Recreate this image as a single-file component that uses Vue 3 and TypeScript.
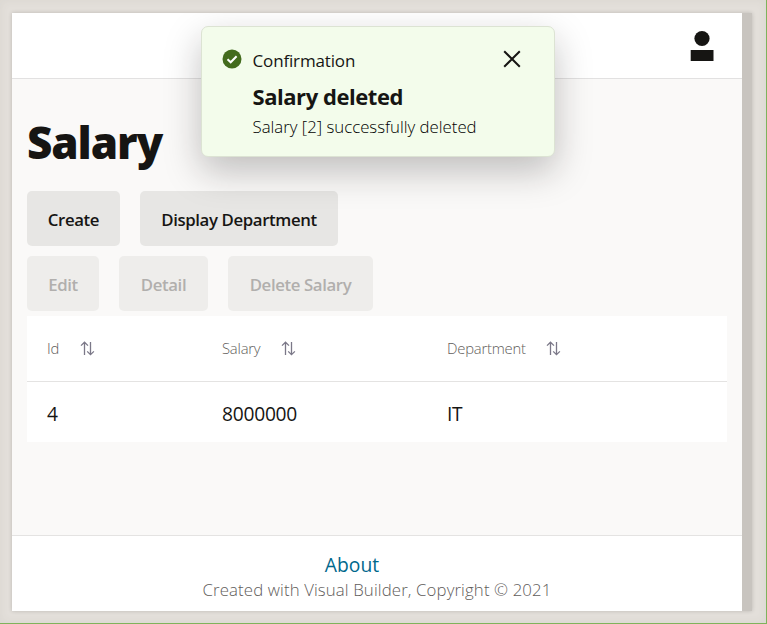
<script setup lang="ts">
interface Column {
  key: 'id' | 'salary' | 'department'
  label: string
}

const columns: Column[] = [
  { key: 'id', label: 'Id' },
  { key: 'salary', label: 'Salary' },
  { key: 'department', label: 'Department' },
]

const rows = [{ id: 4, salary: 8000000, department: 'IT' }]
</script>

<template>
  <div class="canvas">
    <div class="device">
      <div class="page">
        <header class="header">
          <svg class="avatar" width="24" height="32" viewBox="0 0 24 32">
            <circle cx="12" cy="8.5" r="7.6" />
            <rect x="0.7" y="20" width="22.8" height="11" />
          </svg>
        </header>

        <main class="content">
          <h1 class="title"><span>Salary</span></h1>
          <div class="buttons first">
            <button class="btn create"><span>Create</span></button>
            <button class="btn display"><span>Display Department</span></button>
          </div>
          <div class="buttons">
            <button class="btn edit" disabled><span>Edit</span></button>
            <button class="btn detail" disabled><span>Detail</span></button>
            <button class="btn delete" disabled><span>Delete Salary</span></button>
          </div>
          <div class="table">
            <div class="row head">
              <div v-for="col in columns" :key="col.key" class="cell">
                <span>{{ col.label }}</span>
                <svg class="sort" width="15" height="15" viewBox="0 0 15 15">
                  <path d="M4.5 14V1.2M1 4.6L4.5 1.2L8 4.6M10.5 1V13.6M7.2 10.4L10.5 13.6L13.9 10.4" />
                </svg>
              </div>
            </div>
            <div v-for="row in rows" :key="row.id" class="row body">
              <div v-for="col in columns" :key="col.key" class="cell">
                <span>{{ row[col.key] }}</span>
              </div>
            </div>
          </div>
        </main>

        <footer class="footer">
          <a class="about">About</a>
          <span class="copyright">Created with Visual Builder, Copyright © 2021</span>
        </footer>

        <section class="toast">
          <svg class="check" width="20" height="20" viewBox="0 0 20 20">
            <circle cx="10" cy="10" r="9.5" />
            <path d="M5.5 10.2L8.7 13.3L14.6 7.2" />
          </svg>
          <div class="toast-text">
            <span class="category">Confirmation</span>
            <strong class="summary">Salary deleted</strong>
            <span class="message">Salary [2] successfully deleted</span>
          </div>
          <svg class="close" width="18" height="18" viewBox="0 0 18 18">
            <path d="M1.2 1.2L16.8 16.8M16.8 1.2L1.2 16.8" />
          </svg>
        </section>
      </div>
      <div class="scrollbar"></div>
    </div>
  </div>
</template>

<style>
body {
  margin: 0;
  overflow: hidden;
}
</style>

<style scoped>
.canvas {
  box-sizing: border-box;
  width: 767px;
  height: 624px;
  padding: 13px 14px 12px 12px;
  background: #e3dfda;
  border-right: 1px solid #7fb35c;
  border-bottom: 1px solid #7fb35c;
  box-shadow: inset 0 0 10px rgba(90, 80, 70, 0.06);
  font-family: 'Open Sans', 'Noto Sans', sans-serif;
  color: #161513;
}
.device {
  display: flex;
  width: 740px;
  height: 598px;
  box-shadow: 0 0 4px rgba(0, 0, 0, 0.18);
}
.page {
  position: relative;
  display: flex;
  flex-direction: column;
  width: 730px;
  background: #faf9f8;
  overflow: hidden;
}
.scrollbar {
  width: 10px;
  background: #c8c4bf;
}
.header {
  box-sizing: border-box;
  display: flex;
  justify-content: flex-end;
  height: 66px;
  padding: 17px 28px 0 0;
  background: #fff;
  border-bottom: 1px solid #e2e1e1;
}
.avatar {
  fill: #161513;
}
.content {
  display: flex;
  flex: 1;
  flex-direction: column;
  padding: 0 15px;
}
.title {
  margin: 0;
  height: 112px;
  padding-top: 33px;
  box-sizing: border-box;
  font-size: 44px;
  font-weight: 800;
  line-height: 60px;
  letter-spacing: -1.1px;
}
.buttons {
  display: flex;
  gap: 20px;
  height: 55px;
  margin-bottom: 5px;
}
.buttons.first {
  margin-bottom: 10px;
}
.btn {
  padding: 3px 0 0;
  border: 0;
  border-radius: 5px;
  background: #e7e6e4;
  color: #161513;
  font: 600 16.8px/24px 'Open Sans', sans-serif;
  letter-spacing: -0.38px;
  white-space: nowrap;
}
.btn:disabled {
  background: #eeedeb;
  color: #b1afad;
}
.create {
  width: 93px;
}
.display {
  width: 198px;
}
.edit {
  width: 72px;
}
.detail {
  width: 89px;
}
.delete {
  width: 145px;
}
.table {
  height: 126px;
  background: #fff;
}
.row {
  box-sizing: border-box;
  display: grid;
  grid-template-columns: 175px 225px 1fr;
  align-items: center;
  padding-left: 20px;
}
.head {
  height: 66px;
  padding-bottom: 1px;
  border-bottom: 1px solid #e4e3e2;
  color: #5f5d5b;
  font-size: 14.8px;
  font-weight: 300;
  letter-spacing: -0.2px;
}
.body {
  height: 60px;
  padding-top: 3px;
  font-size: 19.2px;
  font-weight: 400;
  letter-spacing: -0.25px;
}
.cell {
  display: flex;
  align-items: center;
  gap: 20.5px;
}
.sort {
  fill: none;
  stroke: #7b7888;
  stroke-width: 1.3;
}
.footer {
  box-sizing: border-box;
  display: flex;
  flex-direction: column;
  align-items: center;
  height: 76px;
  padding-top: 16px;
  background: #fff;
  border-top: 1px solid #e4e3e2;
  white-space: nowrap;
}
.about {
  margin-right: 50px;
  color: #00688c;
  font-size: 19.3px;
  font-weight: 400;
  line-height: 26px;
}
.copyright {
  color: #5f5d5b;
  font-size: 16.8px;
  font-weight: 300;
  line-height: 23px;
  letter-spacing: 0.12px;
}
.toast {
  position: absolute;
  top: 13px;
  left: 189px;
  box-sizing: border-box;
  display: flex;
  width: 354px;
  height: 131px;
  padding: 21px 0 0 20px;
  border: 1px solid #dce3d3;
  border-radius: 7px;
  background: #f3fceb;
  box-shadow: 0 14px 36px rgba(22, 21, 19, 0.26);
}
.check {
  margin: 0.5px 10.5px 0 0;
}
.check circle {
  fill: #436b1d;
}
.check path {
  fill: none;
  stroke: #fff;
  stroke-width: 2;
}
.toast-text {
  display: flex;
  flex-direction: column;
  width: 250.5px;
  white-space: nowrap;
}
.category {
  margin-top: 1px;
  font-size: 17px;
  font-weight: 500;
  line-height: 24px;
  letter-spacing: -0.15px;
}
.summary {
  margin-top: 9px;
  font-size: 22px;
  font-weight: 700;
  line-height: 28px;
  letter-spacing: -0.45px;
}
.message {
  margin-top: 3px;
  color: #000;
  font-size: 16.8px;
  font-weight: 300;
  line-height: 27px;
}
.close {
  margin-top: 2px;
  stroke: #161513;
  stroke-width: 2;
}
</style>
